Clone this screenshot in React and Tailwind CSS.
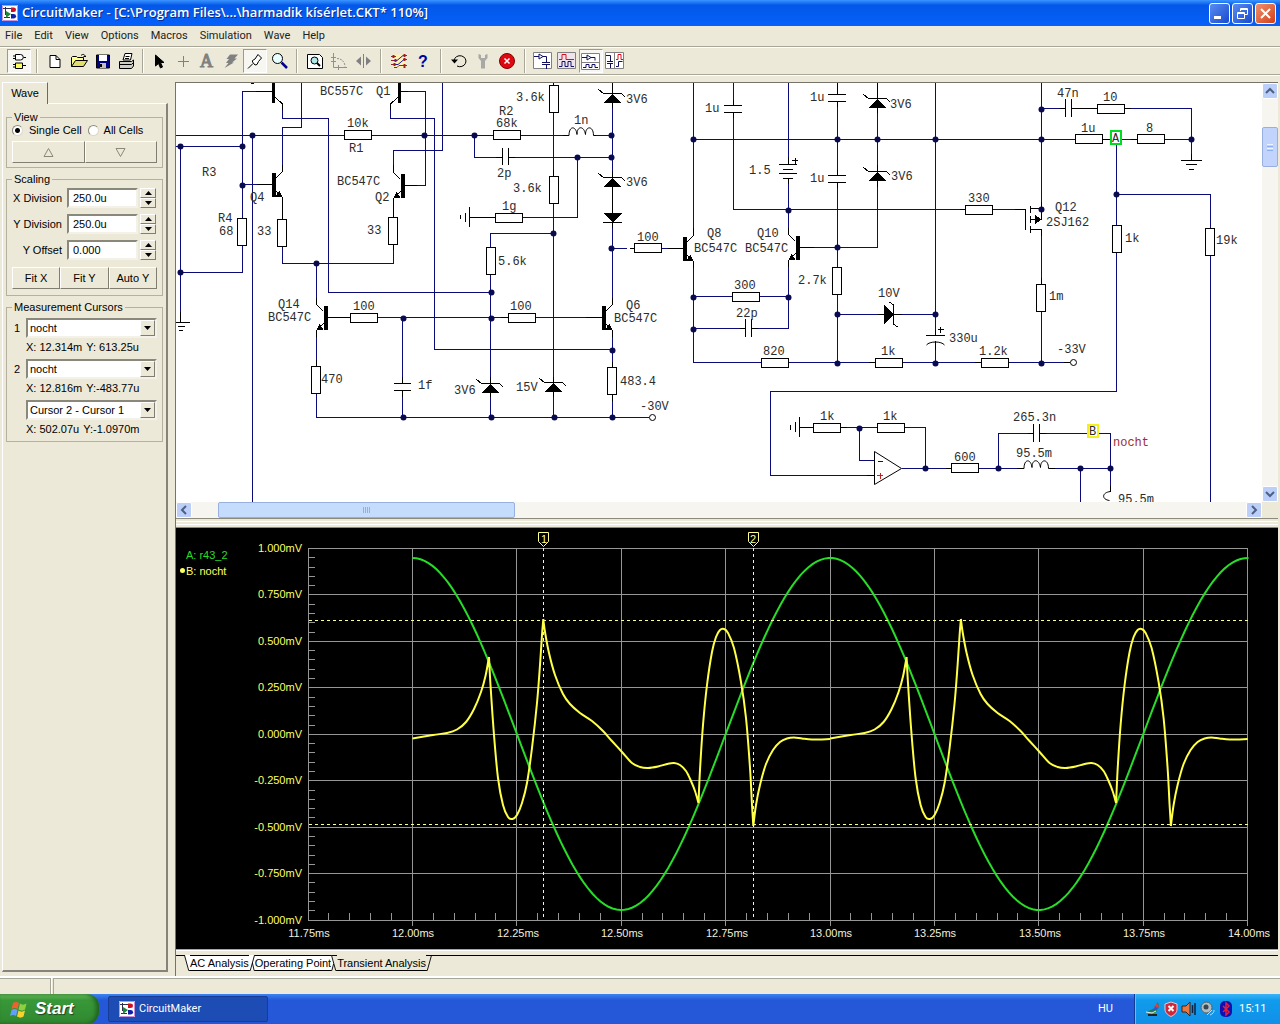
import { useState } from "react"

// ---------- toolbar icons, all on a 20x20 grid ----------

const Icon = ({ children }) => (
    <svg width="20" height="20" viewBox="0 0 20 20" fill="none" stroke="#000" strokeLinejoin="round">
        {children}
    </svg>
)

const AppLogo = () => (
    <svg width="16" height="16" viewBox="0 0 16 16" className="shrink-0" aria-hidden="true">
        <rect width="16" height="16" fill="#fff" />
        <path d="M.5 .5h15v15H.5z" fill="none" stroke="#c890d8" />
        <path d="M1 3.500h9M3.500 2v8M2 12.500h6" stroke="#303050" fill="none" />
        <path d="M9 2.500h2.500a2.500 2.200 0 0 1 0 4.500H9z" fill="#d01020" />
        <path d="M9 9h2.500a2.500 2.200 0 0 1 0 4.500H9z" fill="#1020a0" />
        <path d="M4 6l5 3-5 4z" fill="#208838" />
    </svg>
)

const icons = {
    Gates: (
        <Icon>
            <path d="M6.500 3.500h5a2.500 2.500 0 0 1 0 5.500h-5zM4 5h2.500M4 7.500h2.500M14.500 6.500H17" fill="#fff" />
            <path d="M6.500 12h7v5.500h-7zM4 13.500h2.500M4 16h2.500M14 14.500h3" fill="#ffff60" />
        </Icon>
    ),
    New: <Icon><path d="M5 4.500h6l4 4V16.500H5z" fill="#fff" /><path d="M11 4.500v4h4" /></Icon>,
    Open: (
        <Icon>
            <path d="M2.500 15.500V6.500l1-1h4l1 1h6v3" fill="#ffff90" />
            <path d="M2.500 15.500l4-6h12l-4 6z" fill="#e4dc68" />
            <path d="M12 4.500c2-2 4-1 4.500 1.500M14.500 5.500h2.500" />
        </Icon>
    ),
    Save: (
        <Icon>
            <path d="M3.500 4h13v13h-13z" fill="#000080" />
            <path d="M6 4h8v6H6z" fill="#fff" stroke="none" />
            <path d="M7 12h6v5H7z" fill="#c0c0c0" stroke="none" />
            <path d="M7 13h2v3H7z" fill="#000" stroke="none" />
        </Icon>
    ),
    Print: (
        <Icon>
            <path d="M6 9l2-6.500h7L13.500 9z" fill="#fff" />
            <path d="M8.500 5.500h4M8 7.500h4" />
            <path d="M2.500 10.500h12l2-1.500v6l-2 2.500h-12z" fill="#d0d0c8" />
            <path d="M2.500 13.500h12l2-2" />
        </Icon>
    ),
    Arrow: <Icon><path d="M6.500 4v11l3-2.500 2 4.500 2-1-2-4.500h3.500z" fill="#000" /></Icon>,
    Plus: <Icon><path d="M10.500 5v11M5 10.500h11" stroke="#808080" /></Icon>,
    Letter: <Icon><text x="3" y="16" fontSize="18" fill="#808080" stroke="#808080" fontFamily="'Liberation Serif', serif">A</text></Icon>,
    Bolt: <Icon><path d="M9 3.500h8l-3.500 4H16l-5 4h2L3.500 17l4-5H5l3-4H5.500z" fill="#808080" stroke="none" /></Icon>,
    Probe: <Icon><path d="M3 17.500l5-5M7.500 9.500l2.500-1.500 3-4.500 3.500 3.500-3 3.500-1.500 3-2 .5-2.500-3z" fill="#fff" /></Icon>,
    Magnify: (
        <Icon>
            <circle cx="8.500" cy="7.500" r="5" fill="#e8ffff" />
            <path d="M12.500 11.500l5.500 5.500" stroke="#000090" strokeWidth="2.500" />
        </Icon>
    ),
    FitPage: (
        <Icon>
            <path d="M2.500 3.500h12l3 3v11h-15z" fill="#fff" />
            <circle cx="9.500" cy="9.500" r="3.500" fill="#b0e8e8" />
            <path d="M12 12l3 3" strokeWidth="2" />
        </Icon>
    ),
    Axis: (
        <Icon>
            <path d="M4.500 2v14.500H18M2 6.500h5M2 10.500h5M9.500 14v5" stroke="#909090" />
            <path d="M8 7.500c5 0 8 4 8 8" stroke="#909090" strokeDasharray="2 1" />
        </Icon>
    ),
    Mirror: <Icon><path d="M10.500 3v14" stroke="#808080" /><path d="M8 5.500v9l-5-4.500zM13 5.500v9l5-4.500z" fill="#808080" stroke="none" /></Icon>,
    Net: (
        <Icon>
            <path d="M4 3.500h13v13h-13z" fill="#fff2b0" stroke="none" />
            <path d="M5 9.500h3l6-5M5 13.500h4l6-5" stroke="#1818b0" />
            <path d="M2 5.500h5M2 9.500h3M2 13.500h3M14 4.500h4M14 8.500h4M5 16.500h3l2-2h8" stroke="#a02020" />
            <path d="M4.500 4v3M6.500 8v3M5.500 12v3M15.500 3v3M15.500 7v3M15.500 13v4" stroke="#a02020" strokeWidth="2" />
        </Icon>
    ),
    Help: <Icon><text x="5" y="16" fontSize="16" fontWeight="bold" fill="#0000a0" stroke="none" fontFamily="'Liberation Sans', sans-serif">?</text></Icon>,
    Reset: <Icon><path d="M5 9.500a6 5.500 0 1 1 3 5.500" /><path d="M2 8.500h7l-3.500 4z" fill="#000" stroke="none" /></Icon>,
    Wrench: <Icon><path d="M5.500 3v4l2.500 3v7.500h4V10l2.500-3V3l-2.500 1v3H8V4z" fill="#a8a8a4" stroke="none" /></Icon>,
    Stop: (
        <Icon>
            <circle cx="10" cy="10" r="7.500" fill="#e00810" stroke="#800000" />
            <path d="M7.500 7.500l5 5M12.500 7.500l-5 5" stroke="#fff" strokeWidth="1.500" />
        </Icon>
    ),
    ViewSchematic: (
        <Icon>
            <path d="M.5 1.500h18v16H.5z" fill="#fff" stroke="#808080" />
            <path d="M1 5.500h5M6 3v5l4-2.500zM10 5.500h3.500v6M9 11.500h8M9 13.500h8M13.500 14v4" stroke="#101060" />
        </Icon>
    ),
    ViewWaves: (
        <Icon>
            <path d="M.5 1.500h18v16H.5z" fill="#f0e4ec" stroke="#808080" />
            <path d="M2 8.500h3v-5h4v5h8" stroke="#d01020" />
            <path d="M2 15.500h3v-5h3v5h3v-5h3v5h3" stroke="#101070" />
        </Icon>
    ),
    ViewSplitH: (
        <Icon>
            <path d="M.5 2.500h18v16H.5z" fill="#fff" stroke="#808080" />
            <path d="M1 11.500h17" stroke="#808080" />
            <path d="M1 6.500h5M6 4v5l4-2.500zM10 6.500h4v3M2 16.500h3v-3h3v3h3v-3h3v3h3" stroke="#101060" />
        </Icon>
    ),
    ViewSplitV: (
        <Icon>
            <path d="M.5 1.500h18v16H.5z" fill="#fff" stroke="#808080" />
            <path d="M9.500 2v16" stroke="#808080" />
            <path d="M1 4.500h4.500v6M2 10.500h6M2 12.500h6M5.500 13v4M11 15.500h2.500v-5h4" stroke="#101060" />
            <path d="M11 8.500h2v-5h3v5h2" stroke="#d01020" />
        </Icon>
    ),
}

const ToolButton = ({ name, pressed }) => (
    <button
        type="button"
        aria-label={name}
        className={`w-6 h-6 flex items-center justify-center ${pressed ? "bg-[#f7f6f0] border border-t-[#9c9a8c] border-l-[#9c9a8c] border-r-white border-b-white" : ""}`}
    >
        {icons[name]}
    </button>
)

const Separator = ({ narrow }) => (
    <div className={`h-6 w-[2px] shrink-0 border-l border-[#a8a698] bg-white ${narrow ? "mx-[3px]" : "mx-[5px]"}`} />
)

const toolGroups = [
    ["Gates"],
    ["New", "Open", "Save", "Print"],
    ["Arrow", "Plus", "Letter", "Bolt", "Probe", "Magnify"],
    ["FitPage", "Axis", "Mirror"],
    ["Net", "Help"],
    ["Reset", "Wrench", "Stop"],
    ["ViewSchematic", "ViewWaves", "ViewSplitH", "ViewSplitV"],
]
const pressedTools = ["Gates", "Probe", "ViewSplitH"]

const Toolbar = () => (
    <div className="h-[29px] flex items-center pl-[7px] border-t border-b border-[#a8a698] shadow-[inset_0_1px_0_#fff,0_1px_0_#fff]">
        {toolGroups.map((group, i) => (
            <div key={i} className="flex items-center">
                {i > 0 && <Separator narrow={i === 2} />}
                {group.map((name) => <ToolButton key={name} name={name} pressed={pressedTools.includes(name)} />)}
            </div>
        ))}
    </div>
)

const TitleBar = () => (
    <header className="h-[26px] flex items-center gap-1 pl-[2px] pr-1 bg-linear-to-b from-[#3a94ff] via-[#0458e8] via-20% to-[#0560fa]">
        <AppLogo />
        <h1 className="flex-1 font-['Open_Sans'] font-semibold text-[13px] text-white whitespace-nowrap [text-shadow:1px_1px_0_#0a2a90]">
            CircuitMaker - [C:\Program Files\...\harmadik kísérlet.CKT* 110%]
        </h1>
        <div className="flex gap-[2px]">
            <button type="button" aria-label="Minimize" className="size-[21px] rounded-[3px] border border-white bg-linear-to-br from-[#5a8cf0] to-[#1848d0]">
                <svg viewBox="0 0 19 19"><path d="M4 12h7v3H4z" fill="#fff" /></svg>
            </button>
            <button type="button" aria-label="Restore" className="size-[21px] rounded-[3px] border border-white bg-linear-to-br from-[#5a8cf0] to-[#1848d0]">
                <svg viewBox="0 0 19 19" fill="none" stroke="#fff"><path d="M7.500 7V4.500h7v6H12M7 5.500h7" /><path d="M4.500 8.500h7v6h-7zM4 9.500h7" /></svg>
            </button>
            <button type="button" aria-label="Close" className="size-[21px] rounded-[3px] border border-white bg-linear-to-br from-[#f0906c] to-[#d03c10]">
                <svg viewBox="0 0 19 19" stroke="#fff" strokeWidth="2"><path d="M5 5l9 9M14 5l-9 9" /></svg>
            </button>
        </div>
    </header>
)

const menus = ["File", "Edit", "View", "Options", "Macros", "Simulation", "Wave", "Help"]

const MenuBar = () => (
    <nav className="h-5 flex items-center gap-3 pl-[5px] font-['Roboto'] text-[11px] text-[#222]">
        {menus.map((m) => <button key={m} type="button">{m}</button>)}
    </nav>
)

// ---------- side panel ----------

const raised = "border border-t-white border-l-white border-r-[#807e70] border-b-[#807e70] bg-[#ece9d8]"
const sunken = "border-2 border-t-[#8a887a] border-l-[#8a887a] border-r-[#f4f2e8] border-b-[#f4f2e8] bg-white"
const radio = "appearance-none size-[11px] rounded-full bg-white border border-t-[#8a887a] border-l-[#8a887a] border-r-[#dcd9c8] border-b-[#dcd9c8] checked:bg-[radial-gradient(#000_2px,#fff_3px)]"

const Group = ({ title, children, className }) => (
    <fieldset className={`min-w-0 mx-[3px] px-[5px] border border-[#b4b1a0] ${className}`}>
        <legend className="px-[2px] leading-3">{title}</legend>
        {children}
    </fieldset>
)

const Triangle = ({ down }) => (
    <svg width="7" height="4" viewBox="0 0 7 4" className="block mx-auto">
        <path d={down ? "M0 0h7L3.500 4z" : "M0 4h7L3.500 0z"} fill="#000" />
    </svg>
)

const SpinRow = ({ id, label, value }) => (
    <div className="flex items-center h-[26px]">
        <label htmlFor={id} className="w-[50px] text-right leading-5 mr-[5px] whitespace-nowrap">{label}</label>
        <input id={id} defaultValue={value} className={`w-[71px] h-5 pl-1 ${sunken}`} />
        <div className="ml-[2px] w-4 flex flex-col">
            <button type="button" aria-label={`${label} up`} className={`h-[10px] ${raised}`}><Triangle /></button>
            <button type="button" aria-label={`${label} down`} className={`h-[10px] ${raised}`}><Triangle down /></button>
        </div>
    </div>
)

const Combo = ({ label, text, value, readX, readY }) => (
    <div className="flex mb-1">
        <span className="w-[14px] leading-5 pl-[2px]">{text}</span>
        <div className="flex-1">
            <div className="relative">
                <select aria-label={label} className={`appearance-none w-full h-5 pl-[2px] ${sunken}`}>
                    <option>{value}</option>
                </select>
                <span className={`absolute right-[2px] top-[2px] w-[15px] h-4 flex items-center pointer-events-none ${raised}`}>
                    <Triangle down />
                </span>
            </div>
            <div className="flex gap-1 leading-4 h-4 mt-[1px] whitespace-nowrap">
                <span>{readX}</span>
                <span>{readY}</span>
            </div>
        </div>
    </div>
)

const SidePanel = () => {
    const [cells, setCells] = useState("single")
    return (
        <aside className="w-[168px] shrink-0 flex flex-col pt-[7px] pb-1 pl-[2px]">
            <button type="button" className="relative -mb-px w-[46px] h-[22px] bg-[#ece9d8] border-t border-l border-white border-r border-r-[#6c6a60]">Wave</button>
            <div className="flex-1 border-t border-t-white border-l border-l-white border-r-2 border-b-2 border-r-[#85837a] border-b-[#85837a] pt-[7px]">
                <Group title="View" className="h-[57px]">
                    <div className="flex items-center gap-[6px] whitespace-nowrap leading-4 h-[14px]">
                        <label className="flex items-center gap-[6px]">
                            <input type="radio" name="cells" checked={cells === "single"} onChange={() => setCells("single")} className={radio} />
                            Single Cell
                        </label>
                        <label className="flex items-center gap-[5px]">
                            <input type="radio" name="cells" checked={cells === "all"} onChange={() => setCells("all")} className={radio} />
                            All Cells
                        </label>
                    </div>
                    <div className="grid grid-cols-2 mt-1">
                        <button type="button" aria-label="Previous cell" className={`h-[22px] flex items-center justify-center ${raised}`}>
                            <svg width="11" height="9" viewBox="0 0 11 9"><path d="M1 8.500h9L5.500 .5z" fill="none" stroke="#8a887a" /></svg>
                        </button>
                        <button type="button" aria-label="Next cell" className={`h-[22px] flex items-center justify-center ${raised}`}>
                            <svg width="11" height="9" viewBox="0 0 11 9"><path d="M1 .5h9L5.500 8.500z" fill="none" stroke="#8a887a" /></svg>
                        </button>
                    </div>
                </Group>
                <Group title="Scaling" className="mt-[5px] h-[123px]">
                    <SpinRow id="xdiv" label="X Division" value="250.0u" />
                    <SpinRow id="ydiv" label="Y Division" value="250.0u" />
                    <SpinRow id="yoff" label="Y Offset" value="0.000" />
                    <div className="grid grid-cols-3 mt-1">
                        <button type="button" className={`h-[22px] ${raised}`}>Fit X</button>
                        <button type="button" className={`h-[22px] ${raised}`}>Fit Y</button>
                        <button type="button" className={`h-[22px] ${raised}`}>Auto Y</button>
                    </div>
                </Group>
                <Group title="Measurement Cursors" className="mt-[5px] h-[141px]">
                    <div className="mt-[5px]">
                        <Combo label="Cursor 1" text="1" value="nocht" readX="X: 12.314m" readY="Y: 613.25u" />
                        <Combo label="Cursor 2" text="2" value="nocht" readX="X: 12.816m" readY="Y:-483.77u" />
                        <Combo label="Difference" text="" value="Cursor 2 - Cursor 1" readX="X: 502.07u" readY="Y:-1.0970m" />
                    </div>
                </Group>
            </div>
        </aside>
    )
}

// ---------- schematic ----------

const wires = [
    "M242.500 218V91.500H256M282.500 110V118.500H328.500V292.500H490.500M301.500 83V127.500H282.500V165",
    "M176 135.500H344M372 135.500H494M521 135.500H563M596 135.500H612.500M176 146.500H242.500M180.500 146.500V312M252.500 135.500V502",
    "M242.500 246V272.500H180.500M242.500 184.500H257M282.500 247V263.500H393.500V250M393.500 165V150.500H442.500V83M417 185.500H425.500V91.500H408",
    "M390.500 110V118.500H434.500V349.500H612.500M316.500 263.500V298M316.500 337V360M378 317.500H501M536 317.500H586M402.500 317.500V377M402.500 397V417.500",
    "M316.500 394V417.500H649M553.500 113V170M553.500 204V377M553.500 397V417.500M553.500 233.500H490.500V248M490.500 275V377M490.500 397V417.500",
    "M474.500 135.500V157.500H496M515 157.500H612.500M577.500 157.500V217.500H523M612.500 108V171M612.500 228V298M612.500 248.500H627M662 248.500H668M612.500 337V362M612.500 401V417.500",
    "M693.500 83V228M693.500 268V362.500H761M693.500 139.500H1076M733.500 83V100M733.500 118V209.500H960M788.500 83V157M788.500 184V228M788.500 267V328.500H758",
    "M693.500 328.500H740M693.500 296.500H733M760 296.500H788.500M814 247.500H877.500V187M877.500 113V165M837.500 107V170M837.500 188V268M837.500 295V362.500",
    "M837.500 314.500H878M902 314.500H935.500M935.500 83V330M935.500 350V362.500M789 362.500H869M903 362.500H975M1009 362.500H1064M1041.500 83V202",
    "M1041.500 108.500H1060M1131 108.500H1191.500V154M1041.500 236V278M1041.500 312V362.500M992 209.500H1015M1122 139.500H1131M1165 139.500H1191.500",
    "M1116.500 145V226M1116.500 194.500H1210.500V228M1210.500 256V502M1116.500 253V391.500H770.500V475.500H867M847 427.500H878M905 427.500H925.500V468.500M859.500 427.500V460.500H874",
    "M902 468.500H946M979 468.500H1017M998.500 468.500V433.500H1028M1046 433.500H1087M1099 433.500H1110.500V486M1055 468.500H1110.500M1080.500 468.500V502",
].join("")

const leads = [
    "M256 91.500H272M282.500 104V110M390.500 104V110M408 91.500H401M257 184.500H272M282.500 165V171M282.500 198V219M393.500 198V217M393.500 245V250M393.500 165V172M404 185.500H417",
    "M316.500 298V304M316.500 331V337M316.500 360V367M327 317.500H351M501 317.500H508M586 317.500H602M612.500 298V304M612.500 331V337M612.500 362V368M612.500 395V401",
    "M402.500 377V383.500M394 383.500H411M394 390.500H411M402.500 390.500V397M496 157.500H502.500M502.500 148V165M508.500 148V165M508.500 157.500H515",
    "M563 135.500H569M469.500 217.500H496M469.500 207V227M465.500 213V222M460.500 215V219M553.500 170V176M553.500 83V85M553.500 377V383M490.500 377V383M553.500 390V397M490.500 390V397",
    "M612.500 83V108M612.500 171V228M603 222.500H622M630 248.500H635M668 248.500H683M693.500 228V235M693.500 262V268M788.500 228V234M788.500 261V267M799 247.500H814",
    "M733.500 100V105.500M724 105.500H742M724 112.500H742M733.500 112.500V118M837.500 83V94.500M828 94.500H846M828 101.500H846M837.500 101.500V107M837.500 170V175.500M828 175.500H846M828 182.500H846M837.500 182.500V188",
    "M788.500 157V164.500M779 164.500H797M783 169.500H793M779 173.500H797M783 178.500H793M788.500 178.500V184M792 160.500H798M795.500 158V164",
    "M740 328.500H745.500M745.500 319V337M751.500 319V337M751.500 328.500H758M877.500 83V113M877.500 165V187M878 314.500H902M926 335.500H945M935.500 330V335.500M935.500 341V350M938 329.500H944M940.500 327V333",
    "M869 362.500H876M975 362.500H981M1064 362.500H1070M960 209.500H966M1015 209.500H1025.500V229.500M1030.500 206V213M1030.500 216V223M1030.500 226V233M1030 208.500H1041.500V219M1030 219.500H1036M1030 229.500H1041.500V236M1041.500 202V209M1041.500 278V284",
    "M1060 108.500H1065.500M1065.500 99V117M1071.500 99V117M1071.500 108.500H1098M1125 108.500H1131M1103 139.500H1110M1131 139.500H1137M1191.500 154V160.500M1181 160.500H1202M1186 164.500H1197M1189 169.500H1194",
    "M180.500 312V322.500M176 322.500H190M178 326.500H185M179 330.500H183M799.500 427.500H814M841 427.500H847M799.500 417V437M795.500 422V432M790.500 425V430",
    "M867 475.500H874M946 468.500H951M1017 468.500H1024M1049 468.500H1055M1028 433.500H1033.500M1033.500 424V442M1039.500 424V442M1039.500 433.500H1046M1110.500 486V492",
].join("")

const hResistors = [
    [358, 135], [507, 135], [509, 218], [364, 318], [522, 318], [648, 248], [746, 297], [775, 363], [889, 363],
    [995, 363], [979, 210], [1089, 139], [1151, 139], [1111, 109], [827, 428], [891, 428], [965, 468],
]
const vResistors = [
    [242, 232], [282, 233], [393, 231], [316, 380], [554, 99], [554, 190], [491, 261], [612, 381],
    [837, 281], [1041, 298], [1117, 239], [1210, 242],
]
const dots = [
    [180, 146], [242, 146], [252, 135], [242, 185], [180, 272], [316, 263], [424, 135], [474, 135], [403, 318], [403, 417],
    [611, 135], [611, 157], [577, 157], [553, 233], [491, 292], [491, 318], [491, 417], [554, 417], [612, 417], [612, 350],
    [611, 248], [693, 139], [693, 297], [693, 329], [788, 210], [788, 297], [837, 139], [837, 247], [837, 314], [837, 363],
    [877, 139], [935, 139], [935, 314], [935, 363], [1041, 109], [1041, 139], [1041, 209], [1041, 363], [1191, 139],
    [1116, 194], [859, 428], [925, 468], [998, 468], [1080, 468], [1110, 468],
]
const zeners = [[612.5, 93.5], [612.5, 177.5], [490.5, 383.5], [553.5, 382.5], [877.5, 98.5], [877.5, 171.5]]
const transistors = [[273.5, 184.5, 1], [402.5, 185.5, -1], [325.5, 317.5, -1], [603.5, 317.5, 1], [684.5, 248.5, 1], [797.5, 247.5, -1]]

const partLabels = [
    ["BC557C", 320, 95], ["Q1", 376, 95], ["10k", 347, 127], ["R1", 349, 152], ["R3", 202, 176], ["Q4", 250, 201],
    ["R4", 218, 222], ["68", 219, 235], ["33", 257, 235], ["BC547C", 337, 185], ["Q2", 375, 201], ["33", 367, 234],
    ["Q14", 278, 308], ["BC547C", 268, 321], ["100", 353, 310], ["470", 321, 383], ["1f", 418, 389], ["3V6", 454, 394],
    ["3.6k", 516, 101], ["R2", 499, 115], ["68k", 496, 127], ["1n", 574, 124], ["3V6", 626, 103], ["2p", 497, 177],
    ["3.6k", 513, 192], ["3V6", 626, 186], ["1g", 502, 210], ["5.6k", 498, 265], ["100", 637, 241], ["100", 510, 310],
    ["Q6", 626, 309], ["BC547C", 614, 322], ["15V", 516, 391], ["483.4", 620, 385], ["-30V", 640, 410], ["Q8", 707, 237],
    ["BC547C", 694, 252], ["1u", 705, 112], ["1u", 810, 101], ["3V6", 890, 108], ["1.5", 749, 174], ["1u", 810, 182],
    ["3V6", 891, 180], ["Q10", 757, 237], ["BC547C", 745, 252], ["300", 734, 289], ["22p", 736, 317], ["2.7k", 798, 284],
    ["10V", 878, 297], ["330u", 949, 342], ["820", 763, 355], ["1k", 881, 355], ["47n", 1057, 97], ["10", 1103, 101],
    ["1u", 1081, 132], ["8", 1146, 132], ["330", 968, 202], ["Q12", 1055, 211], ["2SJ162", 1046, 226], ["1k", 1125, 242],
    ["19k", 1216, 244], ["1m", 1049, 300], ["1.2k", 979, 355], ["-33V", 1057, 353], ["1k", 820, 420], ["1k", 883, 420],
    ["265.3n", 1013, 421], ["95.5m", 1016, 457], ["600", 954, 461], ["95.5m", 1118, 503],
]

const Zener = ({ x, y }) => (
    <>
        <path d={`M${x} ${y}l9 9.500h-18z`} fill="#000" stroke="none" />
        <path d={`M${x - 14} ${y - 4}l5 4h18l4 4`} />
    </>
)

const Transistor = ({ x, y, dir }) => (
    <>
        <rect x={x - 1.5} y={y - 11.5} width="3" height="23" fill="#000" />
        <path d={`M${x + dir * 2} ${y - 6}l${dir * 7} -7M${x + dir * 2} ${y + 6}l${dir * 7} 7`} />
        <path d={`M${x + dir * 9} ${y + 13}l${dir * -7} -1l${dir * 4} -6z`} fill="#000" stroke="none" />
    </>
)

const Schematic = () => (
    <svg width="1086" height="419" viewBox="176 83 1086 419" className="block" fill="none" stroke="#000" shapeRendering="crispEdges">
        <path d={wires} stroke="#0a0a78" />
        <path d={leads} />
        <g fill="#fff">
            {hResistors.map(([x, y]) => <rect key={`${x}-${y}`} x={x - 13.5} y={y - 4.5} width="27" height="9" />)}
            {vResistors.map(([x, y]) => <rect key={`${x}-${y}`} x={x - 4.5} y={y - 13.5} width="9" height="27" />)}
        </g>
        {zeners.map(([x, y]) => <Zener key={`${x}-${y}`} x={x} y={y} />)}
        {transistors.map(([x, y, dir]) => <Transistor key={`${x}-${y}`} x={x} y={y} dir={dir} />)}

        {/* pair cut off by the upper edge */}
        <path d="M272 83h3v20h-3zM398 83h3v20h-3z" fill="#000" stroke="none" />
        <path d="M275 97l7.500 7M398 97l-7.500 7M251 83l3 1" />

        {/* plain diode, 10V zener, mosfet arrow */}
        <path d="M603 213h19l-9.500 9.500zM884 305v19l9.500-9.500zM1035 215v9l7-4.500z" fill="#000" stroke="none" />
        <path d="M889.500 302l4 3v19l4 3" />

        <g shapeRendering="auto">
            <path d="M569 135.500c0-10 7-10 8-1c0-9 7-9 8.500 0c0-9 8-9 8 1h2.500" />
            <path d="M1024 468.500c0-10 7-10 8-1c0-9 7-9 8.500 0c0-9 8-9 8 1h1" />
            <path d="M1110.500 491.500c-9 1-9 8-1 9" />
            <path d="M926.500 345c3-4 15-4 18 0" />
            <circle cx="652.500" cy="417.500" r="3" fill="#fff" />
            <circle cx="1073.500" cy="362.500" r="3" fill="#fff" />
            <path d="M874.500 451.500v33l27-16z" fill="#fff" />
            <g fill="#0a0a50" stroke="none">
                {dots.map(([x, y]) => <circle key={`${x}-${y}`} cx={x + 0.5} cy={y + 0.5} r="3" />)}
            </g>
        </g>
        <path d="M878 461.500h5" stroke="#0a0a78" />
        <path d="M877 475.500h6M880.500 473v6" stroke="#c02020" />
        <rect x="1111" y="131" width="10" height="13" fill="#fff" stroke="#00dc20" strokeWidth="2" />
        <rect x="1088" y="425" width="10" height="12" fill="#fff" stroke="#f4f020" strokeWidth="2" />

        <g stroke="none" fill="#2c2c2c" className="font-['Liberation_Mono'] text-[12px]">
            {partLabels.map(([t, x, y]) => <text key={`${x}-${y}`} x={x} y={y}>{t}</text>)}
            <text x="1112" y="142">A</text>
            <text x="1089" y="435">B</text>
            <text x="1113" y="446" fill="#a02c34">nocht</text>
        </g>
    </svg>
)

const scrollButton = "size-4 shrink-0 flex items-center justify-center rounded-[2px] border border-white bg-[#bccff8]"

const Chevron = ({ d }) => (
    <svg width="10" height="10" viewBox="0 0 10 10"><path d={d} fill="none" stroke="#4d6185" strokeWidth="2" /></svg>
)

const SchematicPane = () => (
    <section className="border-t border-[#75736a] h-[436px] flex flex-col">
        <div className="flex h-[419px]">
            <div className="flex-1 min-w-0 overflow-hidden bg-white">
                <Schematic />
            </div>
            <div className="w-4 flex flex-col bg-[#f6f5f0]">
                <button type="button" aria-label="Scroll up" className={scrollButton}><Chevron d="M1 7l4-4 4 4" /></button>
                <div className="mt-7 h-10 rounded-[2px] border border-[#98b0e0] bg-[#c2d4fc] flex flex-col items-center justify-center gap-px">
                    <i className="w-[6px] h-px bg-[#eef4ff]" />
                    <i className="w-[6px] h-px bg-[#8cb0f8]" />
                    <i className="w-[6px] h-px bg-[#eef4ff]" />
                    <i className="w-[6px] h-px bg-[#8cb0f8]" />
                </div>
                <button type="button" aria-label="Scroll down" className={`mt-auto ${scrollButton}`}><Chevron d="M1 3l4 4 4-4" /></button>
            </div>
        </div>
        <div className="flex h-4">
            <div className="flex-1 flex bg-[#f6f5f0]">
                <button type="button" aria-label="Scroll left" className={scrollButton}><Chevron d="M7 1L3 5l4 4" /></button>
                <div className="ml-[26px] w-[297px] rounded-[2px] border border-[#98b0e0] bg-[#c6dcfc] flex items-center justify-center gap-px">
                    <i className="w-px h-[6px] bg-[#8cb0f8]" />
                    <i className="w-px h-[6px] bg-[#8cb0f8]" />
                    <i className="w-px h-[6px] bg-[#8cb0f8]" />
                    <i className="w-px h-[6px] bg-[#8cb0f8]" />
                </div>
                <button type="button" aria-label="Scroll right" className={`ml-auto ${scrollButton}`}><Chevron d="M3 1l4 4-4 4" /></button>
            </div>
            <div className="w-4 bg-[#ece9d8]" />
        </div>
    </section>
)

// ---------- wave plot ----------

const X0 = 309
const DX = 104.4
const Y0 = 548.5
const DY = 46.45
const PERIOD = 417.6

// each run is smooth, the runs meet in sharp peaks
const waveRuns = [
    [[412.5, 738.5], [433, 735], [447, 733], [457, 729.5], [466, 722], [474, 709], [481, 692], [485.5, 676], [489, 657]],
    [[489, 657], [490.5, 685], [494, 735], [498, 778], [503, 805], [508, 817], [512.5, 819], [517, 815], [522, 803], [527, 783], [532, 748], [537, 703], [540, 665], [542, 635], [543.3, 619]],
    [[543.3, 619], [545, 632], [549, 653], [555, 675], [563, 694], [570, 704], [580, 713], [592, 721], [603, 731], [611, 740], [622, 752], [632, 763], [640, 767], [648, 768], [658, 766.5], [667, 764], [674, 763], [680, 765], [686, 771], [691, 781], [695, 791], [698.5, 803]],
    [[698.5, 803], [700, 770], [703, 725], [707, 685], [712, 652], [716, 637], [720, 630], [724, 629], [728, 633], [734, 648], [741, 682], [746, 718], [750, 768], [752, 805], [753.3, 826]],
    [[753.3, 826], [756, 805], [760, 785], [766, 764], [773, 750], [780, 742], [787, 738.5], [794, 737.5], [802, 738.5], [812, 739.5], [830, 739]],
]

// Catmull-Rom spline written out as cubic beziers
const smooth = (pts, dx = 0) => {
    let d = `M${pts[0][0] + dx} ${pts[0][1]}`
    for (let i = 0; i < pts.length - 1; i++) {
        const a = pts[i - 1] || pts[i]
        const b = pts[i]
        const c = pts[i + 1]
        const e = pts[i + 2] || c
        d += `C${b[0] + (c[0] - a[0]) / 6 + dx} ${b[1] + (c[1] - a[1]) / 6} ${c[0] - (e[0] - b[0]) / 6 + dx} ${c[1] - (e[1] - b[1]) / 6} ${c[0] + dx} ${c[1]}`
    }
    return d
}

const yellowPath = [0, PERIOD].map((dx) => waveRuns.map((run) => smooth(run, dx)).join("")).join("")

const sine = Array.from({ length: 210 }, (_, i) => {
    const x = 412.5 + i * 4
    return `${x},${734 - 176 * Math.cos(((x - 412.5) / PERIOD) * 2 * Math.PI)}`
}).join(" ")

const yLabels = ["1.000mV", "0.750mV", "0.500mV", "0.250mV", "0.000mV", "-0.250mV", "-0.500mV", "-0.750mV", "-1.000mV"]
const xLabels = ["11.75ms", "12.00ms", "12.25ms", "12.50ms", "12.75ms", "13.00ms", "13.25ms", "13.50ms", "13.75ms", "14.00ms"]
const half = (n) => Math.floor(n) + 0.5

const gridPath =
    yLabels.map((_, i) => `M308 ${half(Y0 + i * DY)}H1248`).join("") +
    xLabels.map((_, i) => `M${half(X0 - 1 + i * DX)} 548V${i ? 926 : 920}`).join("")

const tickPath =
    Array.from({ length: 40 }, (_, i) => `M309 ${half(Y0 + (i * DY) / 5)}h6`).join("") +
    Array.from({ length: 45 }, (_, i) => `M${half(X0 - 1 + (i * DX) / 5)} 913v7`).join("")

const WavePlot = () => (
    <svg height="421" viewBox="176 528 1102 421" preserveAspectRatio="xMinYMin meet" className="block w-full bg-black" fill="none">
        <path d={gridPath + tickPath} stroke="#969696" shapeRendering="crispEdges" />
        <polyline points={sine} stroke="#28dc28" strokeWidth="2" />
        <path d={yellowPath} stroke="#ffff48" strokeWidth="2" strokeLinejoin="bevel" />
        <path d="M309 620.500H1248M309 824.500H1248M543.500 548V920M753.500 548V920" stroke="#ffff90" strokeDasharray="3 3" shapeRendering="crispEdges" />
        <path d="M538.500 532.500h10v9l-5 5-5-5zM748.500 532.500h10v9l-5 5-5-5z" stroke="#ffff90" />
        <g className="font-['Liberation_Sans'] text-[11px]" fill="#ffff60">
            {yLabels.map((t, i) => <text key={t} x="302" y={Math.round(552 + i * DY)} textAnchor="end">{t}</text>)}
            <text x="541" y="543" fill="#ffff90">1</text>
            <text x="750" y="543" fill="#ffff90">2</text>
            <text x="186" y="559" fill="#28dc28">A: r43_2</text>
            <text x="186" y="575">B: nocht</text>
            <circle cx="182.500" cy="570.500" r="2.500" />
        </g>
        <g className="font-['Liberation_Sans'] text-[11px]" fill="#f0f0dc" textAnchor="middle">
            {xLabels.map((t, i) => <text key={t} x={Math.round(X0 + i * DX)} y="937">{t}</text>)}
        </g>
    </svg>
)

const Slant = ({ d, fill }) => (
    <svg width="6" height="16" viewBox="0 0 7 16" preserveAspectRatio="none" className="shrink-0 -mt-px">
        <path d={fill} fill="#fff" />
        <path d={d} fill="none" stroke="#000" />
    </svg>
)

const AnalysisTabs = () => (
    <div className="h-[25px] pt-1">
        <div className="flex border-t border-black h-4 pl-2 whitespace-nowrap leading-[14px]">
            <Slant d="M.5 0l5 15.500H7" fill="M.5 0H7v15H5z" />
            <button type="button" className="h-[15px] bg-white border-b border-black">AC Analysis</button>
            <Slant d="M6.500 0l-5 15.500H0M4 8l2 7.500h1" fill="M0 0h7v15H0z" />
            <button type="button" className="h-[15px] bg-white border-b border-black">Operating Point</button>
            <Slant d="M.5 0l5 15.500H7M3 9l-2 6.500H0" fill="M0 0h1l3 9-3 6H0z" />
            <button type="button" className="h-4 -mt-px pt-px bg-[#ece9d8] border-b border-black">Transient Analysis</button>
            <Slant d="M6.500 0l-5 15.500H0" fill="" />
        </div>
    </div>
)

// ---------- taskbar ----------

const Taskbar = () => (
    <footer className="h-[30px] flex items-stretch bg-linear-to-b from-[#3c84f0] via-[#2458d8] via-20% to-[#2458d8] font-['Roboto'] text-[11px] text-white">
        <button type="button" className="w-[99px] flex items-center gap-[6px] pl-[10px] rounded-r-[12px] bg-linear-to-b from-[#6cc060] via-[#389838] via-20% to-[#308830] shadow-[inset_-3px_0_4px_#206020]">
            <svg width="19" height="19" viewBox="0 0 19 19" aria-hidden="true">
                <path d="M3 3c2-1.500 4-1.500 6 0L7.500 9c-2-1.500-4-1.500-6 0z" fill="#f06030" />
                <path d="M10 3.500c2 1.500 4 1.500 6.500 0L15 9.500c-2 1.500-4 1.500-6.500 0z" fill="#90d040" />
                <path d="M1.500 10c2-1.500 4-1.500 6 0L6 16c-2-1.500-4-1.500-6 0z" fill="#60a0f8" />
                <path d="M8.500 10.500c2 1.500 4 1.500 6.500 0l-1.500 6c-2 1.500-4 1.500-6.500 0z" fill="#f8d030" />
            </svg>
            <span className="font-['Liberation_Sans'] font-bold italic text-[17px] leading-5 [text-shadow:1px_1px_1px_#204020]">Start</span>
        </button>
        <button type="button" className="ml-[9px] my-[2px] w-[160px] flex items-center gap-1 pl-[10px] rounded-[2px] bg-[#1c4cb4] border border-[#163c98]">
            <AppLogo />
            CircuitMaker
        </button>
        <div className="ml-auto flex items-center mr-[21px]">HU</div>
        <div className="w-[146px] flex items-center gap-[3px] pl-[10px] border-l border-[#103c98] bg-linear-to-b from-[#38b4f8] via-[#109cec] via-20% to-[#1090e8] shadow-[inset_1px_0_0_#50c8ff]">
            <svg width="16" height="16" viewBox="0 0 16 16"><path d="M1 11l7-3 5-7 1 5-4 6z" fill="#208040" /><path d="M8 8l4-6 2 4z" fill="#e04040" /><path d="M7 10l4-5 1 3z" fill="#3050e0" /><path d="M1 11l6 1 4-2" stroke="#e8f0e0" fill="none" /><path d="M3 14h9" stroke="#222" strokeWidth="2" /></svg>
            <svg width="14" height="16" viewBox="0 0 14 16"><path d="M7 1l6 2v5c0 4-3 6-6 7.500C4 14 1 12 1 8V3z" fill="#d02838" stroke="#e8c8d0" /><path d="M4.500 5l5 5M9.500 5l-5 5" stroke="#fff" strokeWidth="2" /></svg>
            <svg width="16" height="16" viewBox="0 0 16 16"><path d="M1 5h4l4-4v14l-4-4H1z" fill="#e87840" stroke="#402010" /><path d="M11.500 4v8M14 2v12" stroke="#102040" strokeWidth="1.500" /></svg>
            <svg width="16" height="16" viewBox="0 0 16 16"><circle cx="6.500" cy="6.500" r="5.500" fill="#b0bcc0" stroke="#506068" /><circle cx="6" cy="6" r="2.500" fill="#384850" /><path d="M10 14c3-1 4-3 4-5M7 14l5-5" stroke="#c0d8f0" fill="none" /></svg>
            <svg width="14" height="16" viewBox="0 0 14 16"><rect x="1" width="12" height="16" rx="5" fill="#1010b0" /><path d="M4 5l6 6-3 3V2l3 3-6 6" stroke="#e02040" strokeWidth="1.500" fill="none" /></svg>
            <time className="ml-[3px]">15:11</time>
        </div>
    </footer>
)

const App = () => (
    <div className="min-h-screen flex flex-col bg-[#ece9d8] font-['Liberation_Sans'] text-[11px] text-black">
        <TitleBar />
        <MenuBar />
        <Toolbar />
        <main className="flex-1 flex">
            <SidePanel />
            <div className="flex-1 min-w-0 ml-[7px] mt-[7px] mr-[2px] border-l border-[#75736a] flex flex-col">
                <SchematicPane />
                <div className="h-[10px] flex flex-col justify-between border-t border-b border-[#8c8a7c] py-[2px]">
                    <div className="h-px bg-white" />
                    <div className="h-px bg-white" />
                </div>
                <WavePlot />
                <div className="h-[2px] bg-[#a8a698] border-b border-white" />
                <AnalysisTabs />
            </div>
        </main>
        <div className="h-[18px] flex gap-[2px] border-t-2 border-white">
            <div className="w-[51px] border-t border-r border-[#a8a698] shadow-[1px_0_0_#fff]" />
            <div className="flex-1 border-t border-l border-[#a8a698]" />
        </div>
        <Taskbar />
    </div>
)

export default App
